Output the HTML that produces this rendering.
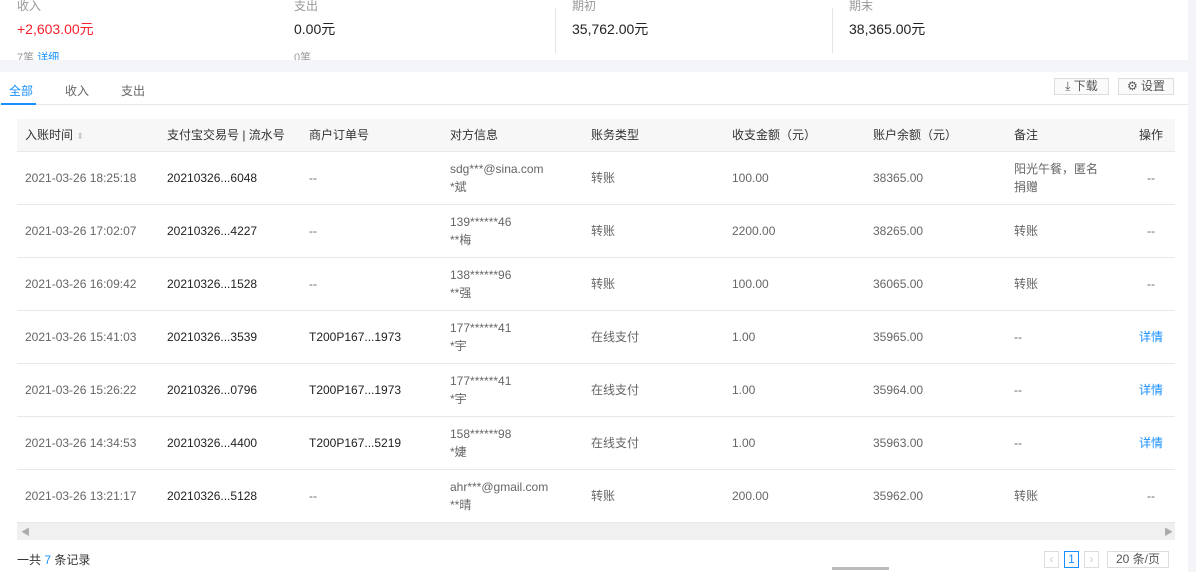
<!DOCTYPE html>
<html><head><meta charset="utf-8"><style>
*{margin:0;padding:0;box-sizing:border-box}
body{width:1196px;height:572px;overflow:hidden;background:#f3f5f9;font-family:"Liberation Sans","Noto Sans CJK SC",sans-serif;font-size:12px;color:#666;position:relative}
.a{position:absolute;white-space:nowrap}
.card1{position:absolute;left:0;top:0;width:1188px;height:60px;background:#fff;overflow:hidden}
.card2{position:absolute;left:0;top:72px;width:1188px;height:500px;background:#fff}
.lbl{color:#999;font-size:12px}
.big{font-size:14px;color:#222}
.row{position:absolute;left:17px;width:1158px;height:53px;border-bottom:1px solid #e8e8e8}
.c{position:absolute;top:0;height:53px;line-height:53px;color:#666}
.dk{color:#222}
.two{line-height:18px;padding-top:8px}
.link{color:#1890ff}
</style></head><body>
<div class="card1">
<div class="a lbl" style="left:17px;top:-3px">收入</div>
<div class="a big" style="left:17px;top:19px;color:#f5222d">+2,603.00元</div>
<div class="a lbl" style="left:17px;top:49px;font-size:11px">7笔 <span class="link">详细</span></div>
<div class="a lbl" style="left:294px;top:-3px">支出</div>
<div class="a big" style="left:294px;top:19px">0.00元</div>
<div class="a lbl" style="left:294px;top:49px;font-size:11px">0笔</div>
<div class="a" style="left:555px;top:8px;width:1px;height:45px;background:#e5e5e5"></div>
<div class="a lbl" style="left:572px;top:-3px">期初</div>
<div class="a big" style="left:572px;top:19px">35,762.00元</div>
<div class="a" style="left:832px;top:8px;width:1px;height:45px;background:#e5e5e5"></div>
<div class="a lbl" style="left:849px;top:-3px">期末</div>
<div class="a big" style="left:849px;top:19px">38,365.00元</div>
</div>
<div class="card2">
<div class="a" style="left:9px;top:10px;color:#1890ff">全部</div>
<div class="a" style="left:65px;top:10px;color:#666">收入</div>
<div class="a" style="left:121px;top:10px;color:#666">支出</div>
<div class="a" style="left:0;top:32px;width:1188px;height:1px;background:#e8e8e8"></div>
<div class="a" style="left:1px;top:31px;width:35px;height:2px;background:#1890ff"></div>
<div class="a" style="left:1054px;top:6px;width:55px;height:17px;border:1px solid #ddd;background:#fafafa;line-height:15px;text-align:center;color:#555">⤓ 下载</div>
<div class="a" style="left:1118px;top:6px;width:56px;height:17px;border:1px solid #ddd;background:#fafafa;line-height:15px;text-align:center;color:#555">⚙ 设置</div>
</div>
<div class="a" style="left:17px;top:119px;width:1158px;height:33px;background:#f7f7f7;border-bottom:1px solid #e8e8e8;color:#333;line-height:33px">
<span class="a" style="left:8px">入账时间 <span style="color:#ccc;font-size:9px">⬍</span></span>
<span class="a" style="left:150px">支付宝交易号 | 流水号</span>
<span class="a" style="left:292px">商户订单号</span>
<span class="a" style="left:433px">对方信息</span>
<span class="a" style="left:574px">账务类型</span>
<span class="a" style="left:715px">收支金额（元）</span>
<span class="a" style="left:856px">账户余额（元）</span>
<span class="a" style="left:997px">备注</span>
<span class="a" style="left:1122px">操作</span>
</div>
<div class="row" style="top:152px;background:#fff">
<div class="c" style="left:8px">2021-03-26 18:25:18</div><div class="c dk" style="left:150px">20210326...6048</div><div class="c" style="left:292px">--</div><div class="c two" style="left:433px">sdg***@sina.com<br>*斌</div><div class="c" style="left:574px">转账</div><div class="c" style="left:715px">100.00</div><div class="c" style="left:856px">38365.00</div><div class="c two" style="left:997px">阳光午餐，匿名<br>捐赠</div><div class="c" style="left:1130px">--</div></div>
<div class="row" style="top:205px;background:#fff">
<div class="c" style="left:8px">2021-03-26 17:02:07</div><div class="c dk" style="left:150px">20210326...4227</div><div class="c" style="left:292px">--</div><div class="c two" style="left:433px">139******46<br>**梅</div><div class="c" style="left:574px">转账</div><div class="c" style="left:715px">2200.00</div><div class="c" style="left:856px">38265.00</div><div class="c" style="left:997px">转账</div><div class="c" style="left:1130px">--</div></div>
<div class="row" style="top:258px;background:#fff">
<div class="c" style="left:8px">2021-03-26 16:09:42</div><div class="c dk" style="left:150px">20210326...1528</div><div class="c" style="left:292px">--</div><div class="c two" style="left:433px">138******96<br>**强</div><div class="c" style="left:574px">转账</div><div class="c" style="left:715px">100.00</div><div class="c" style="left:856px">36065.00</div><div class="c" style="left:997px">转账</div><div class="c" style="left:1130px">--</div></div>
<div class="row" style="top:311px;background:#fff">
<div class="c" style="left:8px">2021-03-26 15:41:03</div><div class="c dk" style="left:150px">20210326...3539</div><div class="c dk" style="left:292px">T200P167...1973</div><div class="c two" style="left:433px">177******41<br>*宇</div><div class="c" style="left:574px">在线支付</div><div class="c" style="left:715px">1.00</div><div class="c" style="left:856px">35965.00</div><div class="c" style="left:997px">--</div><div class="c link" style="left:1122px">详情</div></div>
<div class="row" style="top:364px;background:#fff">
<div class="c" style="left:8px">2021-03-26 15:26:22</div><div class="c dk" style="left:150px">20210326...0796</div><div class="c dk" style="left:292px">T200P167...1973</div><div class="c two" style="left:433px">177******41<br>*宇</div><div class="c" style="left:574px">在线支付</div><div class="c" style="left:715px">1.00</div><div class="c" style="left:856px">35964.00</div><div class="c" style="left:997px">--</div><div class="c link" style="left:1122px">详情</div></div>
<div class="row" style="top:417px;background:#fff">
<div class="c" style="left:8px">2021-03-26 14:34:53</div><div class="c dk" style="left:150px">20210326...4400</div><div class="c dk" style="left:292px">T200P167...5219</div><div class="c two" style="left:433px">158******98<br>*婕</div><div class="c" style="left:574px">在线支付</div><div class="c" style="left:715px">1.00</div><div class="c" style="left:856px">35963.00</div><div class="c" style="left:997px">--</div><div class="c link" style="left:1122px">详情</div></div>
<div class="row" style="top:470px;background:#fff">
<div class="c" style="left:8px">2021-03-26 13:21:17</div><div class="c dk" style="left:150px">20210326...5128</div><div class="c" style="left:292px">--</div><div class="c two" style="left:433px">ahr***@gmail.com<br>**晴</div><div class="c" style="left:574px">转账</div><div class="c" style="left:715px">200.00</div><div class="c" style="left:856px">35962.00</div><div class="c" style="left:997px">转账</div><div class="c" style="left:1130px">--</div></div>
<div class="a" style="left:17px;top:523px;width:1158px;height:17px;background:#f0f0f0"></div>
<div class="a" style="left:21px;top:525px;color:#aaa;font-size:9px">◀</div>
<div class="a" style="left:1164px;top:525px;color:#aaa;font-size:9px">▶</div>
<div class="a" style="left:17px;top:551px;color:#333">一共 <span class="link">7</span> 条记录</div>
<div class="a" style="left:1044px;top:551px;width:15px;height:17px;border:1px solid #ddd;color:#ccc;text-align:center;line-height:15px">‹</div>
<div class="a" style="left:1064px;top:551px;width:15px;height:17px;border:1px solid #1890ff;color:#1890ff;text-align:center;line-height:15px">1</div>
<div class="a" style="left:1084px;top:551px;width:15px;height:17px;border:1px solid #ddd;color:#ccc;text-align:center;line-height:15px">›</div>
<div class="a" style="left:1107px;top:551px;width:62px;height:17px;border:1px solid #ddd;color:#555;text-align:center;line-height:15px">20 条/页</div>
<div class="a" style="left:832px;top:567px;width:57px;height:3px;background:#bbb"></div>
</body></html>
